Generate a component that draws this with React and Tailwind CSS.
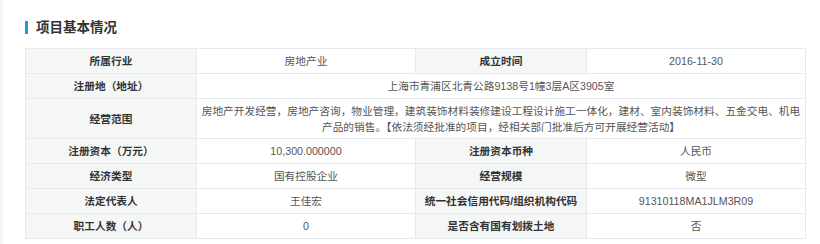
import React from "react";

const font = { fontFamily: '"Liberation Sans", "Noto Sans CJK SC", sans-serif' };

function L({ children }) {
  return (
    <td className="h-[25px] p-0 border border-[#e6eaec] bg-[#f5f6f6] text-center font-bold text-[#333] text-[10.7px] leading-[16px]">
      {children}
    </td>
  );
}
function V({ children, span }) {
  return (
    <td colSpan={span} className="h-[25px] p-0 border border-[#e6eaec] bg-white text-center text-[#555] text-[10.7px] leading-[16px]">
      {children}
    </td>
  );
}

export default function App() {
  return (
    <div className="w-[820px] h-[244px] bg-white flex" style={font}>
      <div className="w-[3px] h-full bg-[#f5f5f6]" />
      <div className="flex-1 pl-[22px] pt-[21px]">
        <div className="flex items-center h-[13px]">
          <div className="w-[3px] h-[13px] bg-[#1a9be6]" />
          <div className="ml-[8px] text-[13.5px] font-bold text-[#333] leading-[13px]">项目基本情况</div>
        </div>
        <table className="mt-[14px] border-collapse table-fixed w-[780px]">
          <colgroup>
            <col className="w-[171px]" />
            <col className="w-[219px]" />
            <col className="w-[171px]" />
            <col className="w-[219px]" />
          </colgroup>
          <tbody>
            <tr>
              <L>所属行业</L>
              <V>房地产业</V>
              <L>成立时间</L>
              <V>2016-11-30</V>
            </tr>
            <tr>
              <L>注册地（地址）</L>
              <V span={3}>上海市青浦区北青公路9138号1幢3层A区3905室</V>
            </tr>
            <tr>
              <td className="h-[40px] p-0 border border-[#e6eaec] bg-[#f5f6f6] text-center font-bold text-[#333] text-[10.7px] leading-[16px]">
                经营范围
              </td>
              <td colSpan={3} className="h-[40px] px-[3px] py-0 border border-[#e6eaec] bg-white text-center text-[#555] text-[10.7px] leading-[16px]">
                房地产开发经营，房地产咨询，物业管理，建筑装饰材料装修建设工程设计施工一体化，建材、室内装饰材料、五金交电、机电产品的销售。【依法须经批准的项目，经相关部门批准后方可开展经营活动】
              </td>
            </tr>
            <tr>
              <L>注册资本（万元）</L>
              <V>10,300.000000</V>
              <L>注册资本币种</L>
              <V>人民币</V>
            </tr>
            <tr>
              <L>经济类型</L>
              <V>国有控股企业</V>
              <L>经营规模</L>
              <V>微型</V>
            </tr>
            <tr>
              <L>法定代表人</L>
              <V>王佳宏</V>
              <L>统一社会信用代码/组织机构代码</L>
              <V>91310118MA1JLM3R09</V>
            </tr>
            <tr>
              <L>职工人数（人）</L>
              <V>0</V>
              <L>是否含有国有划拨土地</L>
              <V>否</V>
            </tr>
          </tbody>
        </table>
      </div>
    </div>
  );
}
